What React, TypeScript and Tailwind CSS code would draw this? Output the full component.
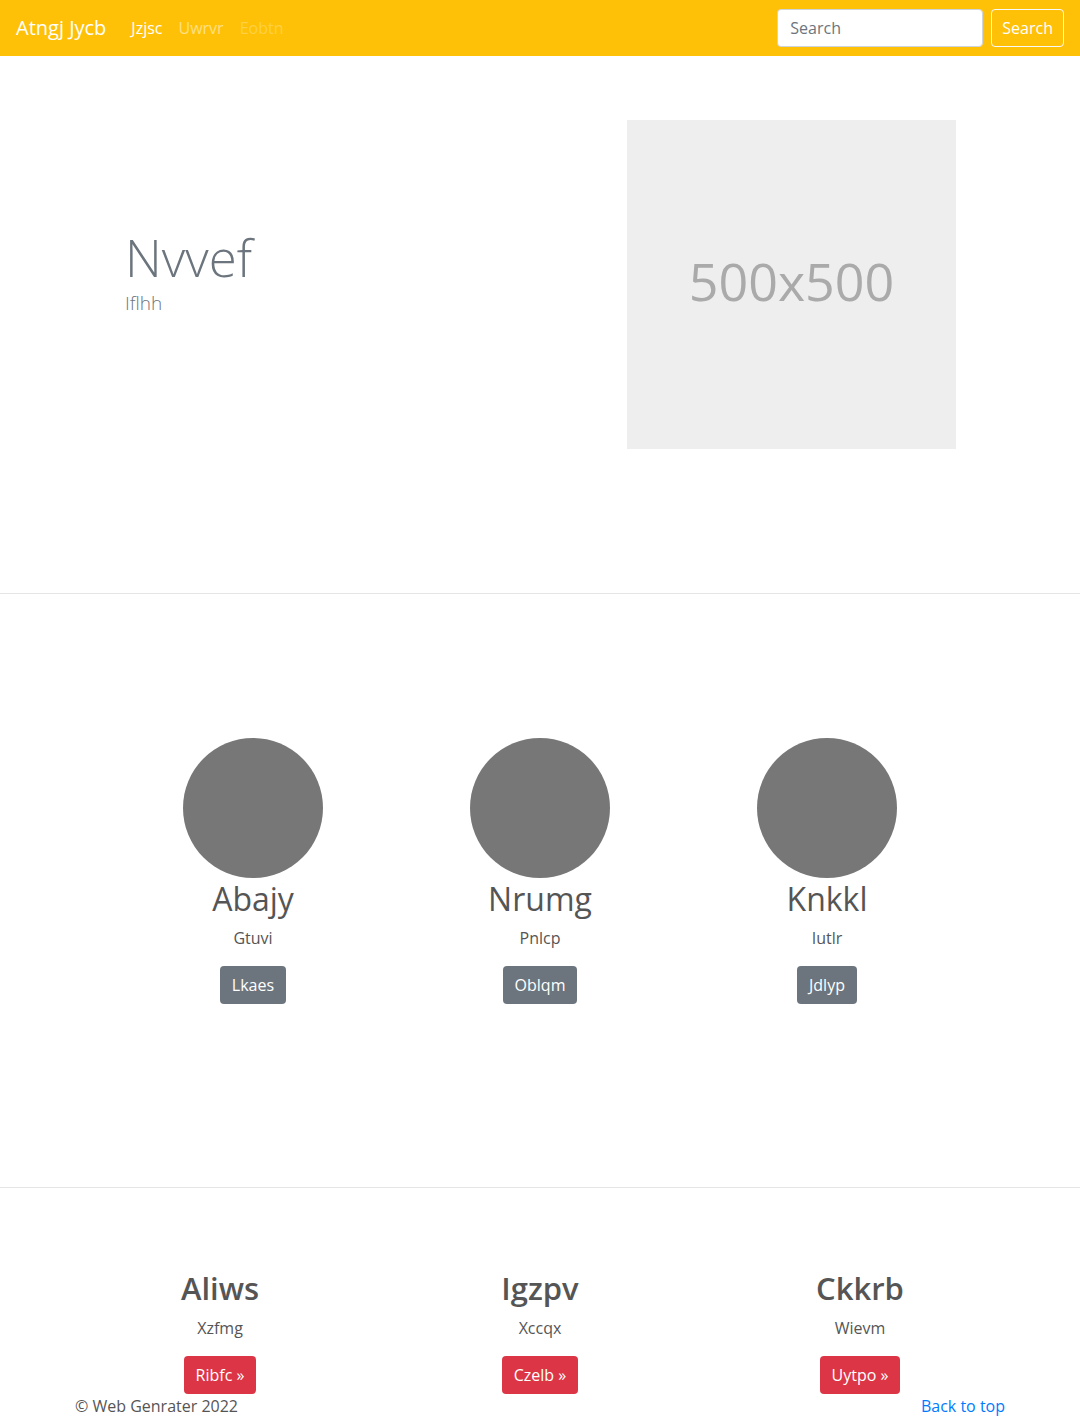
import { useState } from 'react';

const font = { fontFamily: '"Open Sans", "Noto Sans", Arial, sans-serif' };

const team = [
  { name: 'Abajy', sub: 'Gtuvi', btn: 'Lkaes' },
  { name: 'Nrumg', sub: 'Pnlcp', btn: 'Oblqm' },
  { name: 'Knkkl', sub: 'Iutlr', btn: 'Jdlyp' },
];

const features = [
  { name: 'Aliws', sub: 'Xzfmg', btn: 'Ribfc' },
  { name: 'Igzpv', sub: 'Xccqx', btn: 'Czelb' },
  { name: 'Ckkrb', sub: 'Wievm', btn: 'Uytpo' },
];

export default function App() {
  const [query, setQuery] = useState('');

  return (
    <div className="bg-white text-[#555]" style={font}>
      {/* navbar */}
      <nav className="h-14 bg-[#ffc107] flex items-center px-4">
        <a className="text-white text-[20px] mr-[17px]">Atngj Jycb</a>
        <div className="flex items-center text-[16px]">
          <a className="px-2 text-white">Jzjsc</a>
          <a className="px-2 text-white/50">Uwrvr</a>
          <a className="px-2 text-white/25">Eobtn</a>
        </div>
        <div className="ml-auto flex items-center gap-2">
          <input
            value={query}
            onChange={(e) => setQuery(e.target.value)}
            placeholder="Search"
            className="w-[206px] h-[38px] rounded bg-white border border-[#ced4da] px-3 text-[16px] text-[#495057] placeholder:text-[#6c757d] outline-none"
          />
          <button className="h-[38px] px-[10px] rounded border border-[#f8f9fa] text-white text-[16px]">Search</button>
        </div>
      </nav>

      {/* hero */}
      <section className="flex items-center justify-between px-[124px] pt-16 pb-[144px] border-b border-[#e5e5e5]">
        <div className="pl-px mb-6">
          <h1 className="text-[51px] font-light leading-[1.2] text-[#6c757d]">Nvvef</h1>
          <p className="text-[19px] font-light leading-[30px] text-[#6c757d]">Iflhh</p>
        </div>
        <div className="w-[329px] h-[329px] bg-[#eee] flex items-center justify-center text-[#aaa] text-[52px] pb-2">
          500x500
        </div>
      </section>

      {/* team */}
      <section className="pt-[144px] pb-[183px] border-b border-[#e5e5e5]">
        <div className="w-[861px] mx-auto grid grid-cols-3">
          {team.map((t) => (
            <div key={t.name} className="flex flex-col items-center text-center">
              <div className="w-[140px] h-[140px] rounded-full bg-[#777]" />
              <h2 className="text-[32px] leading-[1.2] mt-0.5 mb-2">{t.name}</h2>
              <p className="text-[16px] leading-6 mb-4">{t.sub}</p>
              <button className="h-[38px] px-3 rounded bg-[#6c757d] text-white text-[16px]">{t.btn}</button>
            </div>
          ))}
        </div>
      </section>

      {/* features */}
      <section className="pt-[82px]">
        <div className="w-[960px] mx-auto grid grid-cols-3">
          {features.map((f) => (
            <div key={f.name} className="flex flex-col items-center text-center">
              <h2 className="text-[31px] font-semibold leading-[1.2] mb-2">{f.name}</h2>
              <p className="text-[16px] leading-6 mb-4">{f.sub}</p>
              <button className="h-[38px] px-3 rounded bg-[#dc3545] text-white text-[16px]">{f.btn} »</button>
            </div>
          ))}
        </div>
      </section>

      {/* footer */}
      <footer className="w-[960px] mx-auto px-[15px] flex justify-between text-[16px] leading-6">
        <p>© Web Genrater 2022</p>
        <a className="text-[#007bff]">Back to top</a>
      </footer>
    </div>
  );
}
